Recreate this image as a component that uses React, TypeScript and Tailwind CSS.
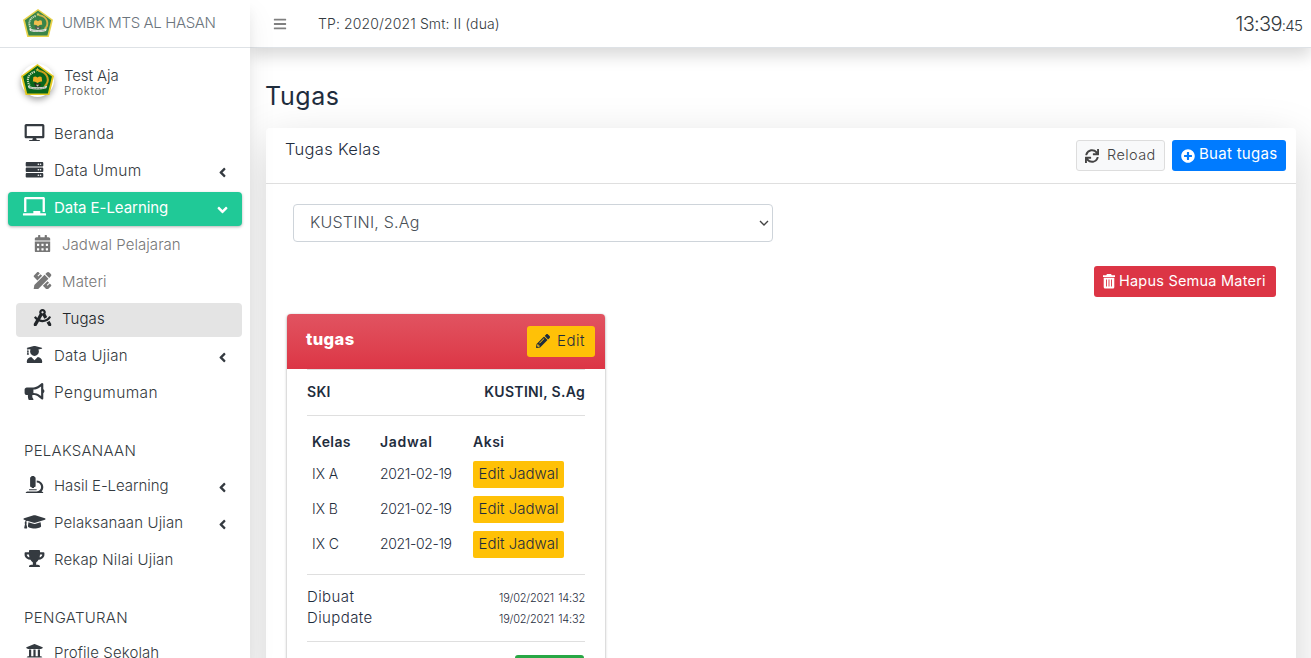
import React from "react";
import {
  FaDesktop, FaServer, FaChalkboard, FaCalendarAlt, FaPencilRuler, FaDraftingCompass,
  FaUserGraduate, FaBullhorn, FaMicroscope, FaGraduationCap, FaTrophy, FaUniversity,
  FaAngleLeft, FaAngleDown, FaBars, FaSync, FaPlusCircle, FaPencilAlt,
} from "react-icons/fa";
import type { IconType } from "react-icons";

function Emblem({ className }: { className: string }) {
  return (
    <svg viewBox="0 0 64 60" preserveAspectRatio="none" className={className}>
      <path d="M32 0 64 23 55 60H9L0 23Z" fill="#e3c81f" />
      <path d="M32 3.500 60 24 52 57H12L4 24Z" fill="#08661c" />
      <path d="M27 15C13 19 10 32 17 42" fill="none" stroke="#cfd9b8" strokeWidth="4" strokeDasharray="2.500 1.500" />
      <path d="M34 13C54 16 56 34 46 43" fill="none" stroke="#c99f1c" strokeWidth="4" />
      <path d="m32 7 1.200 3 3 0-2.300 2 .8 3-2.700-1.700-2.700 1.700.8-3-2.300-2 3 0Z" fill="#d8c33a" />
      <path d="M24 25q4-2 8 1 4-3 8-1l1 9q-5-1-9 3-4-4-9-3Z" fill="#f0ae22" />
      <path d="M25 36q4 0 7 3 3-3 7 0l-3 5h-8Z" fill="#2b2b20" />
      <path d="M29 40h6l-3 4Z" fill="#ccc" />
      <path d="M13 42q19 6 38 0l-2 5q-17 5-34 0Z" fill="#dfe3da" />
      <path d="M17 45.500q15 4 30 0" fill="none" stroke="#55604f" strokeWidth="1.500" strokeDasharray="2 1" />
    </svg>
  );
}

type Item = { icon: IconType; label: string; track: string; arrow?: "left" | "down"; kind?: "active" | "sub" | "current" };

const menu: Item[] = [
  { icon: FaDesktop, label: "Beranda", track: "tracking-[0.3px]" },
  { icon: FaServer, label: "Data Umum", track: "text-[15.5px] tracking-[0.3px]", arrow: "left" },
  { icon: FaChalkboard, label: "Data E-Learning", track: "tracking-[-0.05px]", arrow: "down", kind: "active" },
  { icon: FaCalendarAlt, label: "Jadwal Pelajaran", track: "tracking-[0.05px]", kind: "sub" },
  { icon: FaPencilRuler, label: "Materi", track: "tracking-[0.15px]", kind: "sub" },
  { icon: FaDraftingCompass, label: "Tugas", track: "tracking-[0.1px]", kind: "current" },
  { icon: FaUserGraduate, label: "Data Ujian", track: "tracking-[0.27px]", arrow: "left" },
  { icon: FaBullhorn, label: "Pengumuman", track: "text-[15.5px] tracking-[0.4px]" },
];
const running: Item[] = [
  { icon: FaMicroscope, label: "Hasil E-Learning", track: "tracking-[-0.05px]", arrow: "left" },
  { icon: FaGraduationCap, label: "Pelaksanaan Ujian", track: "tracking-[0.12px]", arrow: "left" },
  { icon: FaTrophy, label: "Rekap Nilai Ujian", track: "tracking-[0.15px]" },
];
const settings: Item[] = [{ icon: FaUniversity, label: "Profile Sekolah", track: "tracking-[0.1px]" }];

function NavItem({ icon: Icon, label, track, arrow, kind }: Item) {
  const tone =
    kind === "active" ? "ml-2 bg-[#20c997] text-white font-normal shadow-[0_1px_3px_rgba(0,0,0,.3)]"
    : kind === "sub" ? "ml-4 text-[#777]"
    : kind === "current" ? "ml-4 bg-[#e4e4e4] text-[#212529]"
    : "ml-2 text-[#343a40]";
  const size = kind === "active" ? "h-[18.500px] w-[25px]" : "h-[17.600px] w-[25px]";
  return (
    <a className={`mr-2 mb-[3px] flex h-[34px] items-center rounded pl-[14px] pr-[14px] pb-[2px] text-[15px] ${tone}`}>
      <Icon className={`mb-[3px] shrink-0 ${size}`} />
      <span className={`ml-[7px] flex-1 whitespace-nowrap ${track}`}>{label}</span>
      {arrow === "left" && <FaAngleLeft className="mt-[3px] h-[15px] w-[11px]" />}
      {arrow === "down" && <FaAngleDown className="mt-[3px] h-[16px] w-[11px]" />}
    </a>
  );
}

function Sidebar() {
  return (
    <aside className="relative z-20 h-full w-[250px] shrink-0 overflow-visible bg-white shadow-[0_14px_28px_rgba(0,0,0,.07),0_10px_10px_rgba(0,0,0,.05)]">
      <div className="flex h-12 items-center border-b border-[#dee2e6] pl-[23px]">
        <Emblem className="mb-[2px] h-7 w-[30px] opacity-80" />
        <span className="ml-[9px] text-[15px] tracking-[-0.37px] text-[#6c757d]">UMBK MTS AL HASAN</span>
      </div>
      <div className="flex h-[70px] pl-[21px] pt-4">
        <div className="size-[33px] rounded-full shadow-[0_3px_6px_rgba(0,0,0,.35)]">
          <Emblem className="h-[31px] w-[33px]" />
        </div>
        <div className="ml-[10px] pt-[3px]">
          <div className="text-[15px] leading-[18px] tracking-[-0.1px] text-[#343a40]">Test Aja</div>
          <div className="text-[11.5px] leading-[13px] tracking-[0.6px] text-[#555]">Proktor</div>
        </div>
      </div>
      <nav>
        {menu.map((m) => <NavItem key={m.label} {...m} />)}
        <h2 className="flex h-14 items-center pl-6 pt-[18px] text-[15px] tracking-[0.25px] text-[#343a40]">PELAKSANAAN</h2>
        {running.map((m) => <NavItem key={m.label} {...m} />)}
        <h2 className="flex h-14 items-center pl-6 pt-[18px] text-[15px] tracking-[0.3px] text-[#343a40]">PENGATURAN</h2>
        {settings.map((m) => <NavItem key={m.label} {...m} />)}
      </nav>
    </aside>
  );
}

const rows = ["IX A", "IX B", "IX C"];

function TaskCard() {
  return (
    <article className="ml-[21px] mt-[17px] h-[400px] w-[318px] rounded bg-white text-[#1f2d3d] shadow-[0_0_1px_rgba(0,0,0,.125),0_1px_3px_rgba(0,0,0,.35)]">
      <header className="flex h-[55px] justify-between rounded-t bg-linear-to-b from-[#e15361] to-[#dc3545] pl-[19px] pr-[10px] pt-3">
        <h3 className="mt-[1px] text-[16.5px] font-extrabold tracking-[0.4px] text-white">tugas</h3>
        <button className="flex h-[31px] w-[68px] items-center rounded-[3px] bg-[#ffc107] pl-[9px] text-[15px] text-[#1f2d3d]">
          <FaPencilAlt className="mb-[2px] size-[14px]" /><span className="ml-[7px] tracking-[0.5px]">Edit</span>
        </button>
      </header>
      <div className="mx-5">
        <div className="flex h-[47px] items-center justify-between border-y border-[#dfdfdf] pb-[2px] text-[14px] font-semibold">
          <span className="tracking-[0.3px]">SKI</span><span className="tracking-[0.3px]">KUSTINI, S.Ag</span>
        </div>
        <table className="ml-[5px] mt-[12px] border-collapse text-[14px]">
          <thead>
            <tr className="h-[27px] text-left">
              <th className="w-[68px] font-semibold tracking-[0.4px]">Kelas</th>
              <th className="w-[93px] font-semibold tracking-[0.7px]">Jadwal</th>
              <th className="w-[95px] font-semibold tracking-[0.5px]">Aksi</th>
            </tr>
          </thead>
          <tbody>
            {rows.map((r) => (
              <tr key={r} className="h-[35px]">
                <td><span className="relative top-[1px]">{r}</span></td>
                <td className="tracking-[-0.35px]"><span className="relative top-[1px]">2021-02-19</span></td>
                <td><button className="mt-[3px] block h-[27px] w-[91px] rounded-[2px] bg-[#ffc107] text-[15px]">Edit Jadwal</button></td>
              </tr>
            ))}
          </tbody>
        </table>
        <div className="mt-[14px] border-y border-[#dfdfdf] pb-[12px] pt-[12px]">
          {["Dibuat", "Diupdate"].map((l) => (
            <div key={l} className="flex h-[21px] items-center justify-between text-[15px] tracking-[0.4px]">
              <span>{l}</span><span className="pt-[2px] text-[11px] tracking-[-0.2px] [word-spacing:1.5px]">19/02/2021 14:32</span>
            </div>
          ))}
        </div>
        <div className="flex justify-end pr-[1px] pt-[13px]"><button className="h-[31px] w-[69px] rounded-[3px] bg-[#28a745]" /></div>
      </div>
    </article>
  );
}

export default function App() {
  return (
    <div className="flex h-[658px] w-[1311px] overflow-hidden bg-white font-['Inter',sans-serif] font-light">
      <Sidebar />
      <div className="min-w-0 flex-1">
        <header className="relative z-10 flex h-12 items-center border-b border-[#dee2e6] bg-white pl-[23px] pr-[9px] text-[#343a40] shadow-[0_8px_16px_rgba(0,0,0,.15)]">
          <FaBars className="size-[14px] text-[#808080]" />
          <span className="ml-[31px] flex-1 text-[14px] tracking-[0.12px]">TP: 2020/2021 Smt: II (dua)</span>
          <span className="text-[20px] leading-none tracking-[-0.7px]">13:39<span className="text-[15px] tracking-[-0.8px]">:45</span></span>
        </header>
        <h1 className="h-20 pl-[15px] pt-[31px] text-[25px] leading-[34px] font-normal tracking-[0.6px] text-[#1f2d3d]">Tugas</h1>
        <section className="ml-4 h-[700px] w-[1030px] rounded bg-white shadow-[0_16px_48px_rgba(0,0,0,.175)]">
          <header className="flex h-14 border-b border-[#dfdfdf] pl-[19px] pr-[10px] pt-3">
            <h2 className="-mt-[3px] flex-1 text-[16.5px] tracking-[0.3px] text-[#1f2d3d]">Tugas Kelas</h2>
            <button className="flex h-[31px] w-[89px] items-center rounded-[3px] border border-[#ddd] bg-[#f8f9fa] pl-2 text-[14.5px] text-[#444]">
              <FaSync className="size-[14px]" /><span className="mb-[2px] ml-2 tracking-[0.4px]">Reload</span>
            </button>
            <button className="ml-[7px] flex h-[31px] w-[114px] items-center rounded-[3px] bg-[#007bff] pl-[9px] text-[15px] font-normal text-white">
              <FaPlusCircle className="size-[14px]" /><span className="mb-[2px] ml-1 whitespace-nowrap tracking-[0.28px]">Buat tugas</span>
            </button>
          </header>
          <div className="ml-[27px] mt-5 flex h-[38px] w-[480px] items-center justify-between rounded border border-[#ced4da] pb-[1px] pl-4 pr-[3px] text-[16px] text-[#495057]">
            <span className="mb-[1px] tracking-[0.2px]">KUSTINI, S.Ag</span>
            <svg viewBox="0 0 10 6" className="h-[6px] w-[10px]"><path d="m1 1 4 4 4-4" fill="none" stroke="#444" strokeWidth="1.400" /></svg>
          </div>
          <div className="mt-6 flex justify-end pr-5">
            <button className="flex h-[31px] w-[182px] items-center rounded-[3px] bg-[#dc3545] pl-[8px] text-[14.5px] font-normal text-white">
              <svg viewBox="0 0 14 15" className="h-[15px] w-[14px]">
                <path d="M5 0h4l.8 1.200H13v1.800H1V1.200h3.200Z" fill="currentColor" />
                <path d="M1.700 3.700h10.600V13q0 1.500-1.500 1.500H3.200Q1.700 14.500 1.700 13Z" fill="currentColor" />
                <path d="M4.500 5.500v7M7 5.500v7M9.500 5.500v7" stroke="#dc3545" strokeWidth=".9" />
              </svg>
              <span className="mb-[2px] ml-[3px] whitespace-nowrap tracking-[0.22px]">Hapus Semua Materi</span>
            </button>
          </div>
          <TaskCard />
        </section>
      </div>
    </div>
  );
}
